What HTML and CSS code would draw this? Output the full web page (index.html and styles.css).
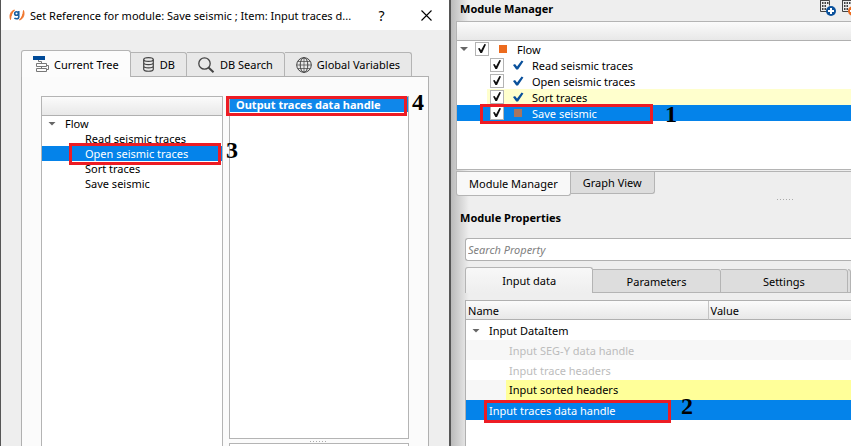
FILE: index.html
```html
<!DOCTYPE html>
<html lang="en">
<head>
    <meta charset="UTF-8">
    <title>Set Reference for module</title>
    <link rel="stylesheet" href="styles.css">
</head>
<body>

<!-- Reference dialog -->
<section class="dialog" role="dialog" aria-labelledby="dialogTitle">
    <header class="titlebar">
        <svg class="logo" viewBox="0 0 16 12">
            <path d="M5.500 1C2 2 0 6 1.500 10.500C2 6 3 3.500 5.500 1z" fill="#f0742a" stroke="#f0742a"/>
            <path d="M10.500 11C14 10 16 6 14.500 1.500C14 6 13 8.500 10.500 11z" fill="#f0742a" stroke="#f0742a"/>
            <circle cx="7.500" cy="4.500" r="1.800" fill="none" stroke="#1b5f9e" stroke-width="1.600"/>
            <path d="M9.800 2v6q0 1.800-2.300 1.800-1.300 0-2.100-.6" fill="none" stroke="#1b5f9e" stroke-width="1.500"/>
        </svg>
        <h1 id="dialogTitle">Set Reference for module: Save seismic ; Item: Input traces d...</h1>
        <button class="title-btn" type="button">?</button>
        <button class="title-btn" type="button" aria-label="Close">
            <svg width="11" height="11" viewBox="0 0 11 11"><path d="M.5 .5l10 10M10.500 .5l-10 10" stroke="#000" stroke-width="1.100"/></svg>
        </button>
    </header>

    <div class="dialog-body">
        <div class="tabs" role="tablist">
            <button class="tab active" role="tab" aria-selected="true" type="button">
                <svg width="17" height="17" viewBox="0 0 17 17">
                    <path d="M0 0h12v4H0z" fill="#004a98"/>
                    <path d="M5.500 4v1.500h3v2M3.500 7.500h10v3h-10zM3.500 12.500h10v3h-10zM13.500 9.500h2v4h-2M8.500 10.500v2" fill="none" stroke="#777"/>
                </svg>
                Current Tree
            </button>
            <button class="tab" role="tab" type="button">
                <svg width="13" height="15" viewBox="0 0 13 15">
                    <g fill="none" stroke="#444" stroke-width="1.200">
                        <ellipse cx="6.500" cy="2.500" rx="4.800" ry="1.900"/>
                        <path d="M1.700 2.500v9.800c0 2.600 9.600 2.600 9.600 0V2.500M1.700 5.800c0 2.500 9.600 2.500 9.600 0M1.700 9c0 2.500 9.600 2.500 9.600 0"/>
                    </g>
                </svg>
                DB
            </button>
            <button class="tab" role="tab" type="button">
                <svg width="17" height="16" viewBox="0 0 17 16">
                    <circle cx="6.500" cy="6.500" r="5.700" fill="none" stroke="#444" stroke-width="1.300"/>
                    <path d="M10.500 10.500l5 4.700" stroke="#444" stroke-width="2"/>
                </svg>
                DB Search
            </button>
            <button class="tab" role="tab" type="button">
                <svg width="16" height="16" viewBox="0 0 16 16">
                    <g fill="none" stroke="#444">
                        <circle cx="8" cy="8" r="7.300"/>
                        <ellipse cx="8" cy="8" rx="3.800" ry="7.300"/>
                        <path d="M8 .7v14.600M.7 8h14.600M2 4.500h12M2 11.500h12" stroke-width=".7"/>
                    </g>
                </svg>
                Global Variables
            </button>
        </div>

        <div class="pane">
            <div class="box source">
                <div class="box-header"></div>
                <ul class="tree">
                    <li class="row root"><span class="arrow"></span>Flow</li>
                    <li class="row">Read seismic traces</li>
                    <li class="row selected">Open seismic traces
                        <span class="mark mark-open"></span><b class="step step-open">3</b>
                    </li>
                    <li class="row">Sort traces</li>
                    <li class="row">Save seismic</li>
                </ul>
            </div>
            <div class="outputs">
                <div class="box output-list">
                    <div class="output-row">Output traces data handle
                        <span class="mark mark-output"></span><b class="step step-output">4</b>
                    </div>
                </div>
                <div class="grip"></div>
                <div class="box output-extra"></div>
            </div>
        </div>
    </div>
</section>

<!-- Main window behind the dialog -->
<main class="workspace">
    <div class="panel-head">
        <h2>Module Manager</h2>
        <div class="tools">
            <button class="tool" type="button" aria-label="Add module">
                <svg width="16" height="17" viewBox="0 0 16 17">
                    <path d="M.5 0v11.500h7M0 .5h9.500v5" fill="none" stroke="#444"/>
                    <path d="M2 3h1.500M4.500 3h1.500M7 3h1.500M2 6h1.500M4.500 6h1.500M2 9h1.500M4.500 9h1.500" stroke="#444" stroke-width="2"/>
                    <circle cx="11" cy="11" r="5" fill="#0a519c"/>
                    <path d="M11 8v6M8 11h6" stroke="#fff" stroke-width="2"/>
                </svg>
            </button>
            <button class="tool" type="button" aria-label="Remove module">
                <svg width="16" height="17" viewBox="0 0 16 17">
                    <path d="M.5 0v11.500h7M0 .5h9.500v5" fill="none" stroke="#444"/>
                    <path d="M2 3h1.500M4.500 3h1.500M7 3h1.500M2 6h1.500M4.500 6h1.500M2 9h1.500M4.500 9h1.500" stroke="#444" stroke-width="2"/>
                    <circle cx="11" cy="11" r="5" fill="#ec6b1e"/>
                    <path d="M8 11h6" stroke="#fff" stroke-width="2"/>
                </svg>
            </button>
        </div>
    </div>

    <div class="box manager">
        <div class="box-header"></div>
        <ul class="flow">
            <li class="flow-row top">
                <span class="arrow"></span>
                <input type="checkbox" id="flow" checked><span class="state square"></span><label for="flow">Flow</label>
            </li>
            <li class="flow-row">
                <input type="checkbox" id="read" checked><span class="state done"></span><label for="read">Read seismic traces</label>
            </li>
            <li class="flow-row">
                <input type="checkbox" id="open" checked><span class="state done"></span><label for="open">Open seismic traces</label>
            </li>
            <li class="flow-row changed">
                <input type="checkbox" id="sort" checked><span class="state done"></span><label for="sort">Sort traces</label>
            </li>
            <li class="flow-row selected">
                <input type="checkbox" id="save" checked><span class="state square"></span><label for="save">Save seismic</label>
                <span class="mark mark-save"></span><b class="step step-save">1</b>
            </li>
        </ul>
    </div>

    <div class="bottom-tabs" role="tablist">
        <button class="tab active" role="tab" aria-selected="true" type="button">Module Manager</button>
        <button class="tab" role="tab" type="button">Graph View</button>
    </div>
    <div class="grip"></div>

    <h2 class="props-title">Module Properties</h2>
    <div class="props">
        <input class="search" type="text" placeholder="Search Property" aria-label="Search Property">
        <div class="prop-tabs" role="tablist">
            <button class="tab active" role="tab" aria-selected="true" type="button">Input data</button>
            <button class="tab" role="tab" type="button">Parameters</button>
            <button class="tab" role="tab" type="button">Settings</button>
            <button class="tab rest" role="tab" type="button" aria-label="More"></button>
        </div>
        <div class="table-box">
            <table>
                <thead>
                    <tr><th class="name-col">Name</th><th>Value</th></tr>
                </thead>
                <tbody>
                    <tr><td class="group"><span class="arrow"></span>Input DataItem</td><td></td></tr>
                    <tr class="alt disabled"><td class="child">Input SEG-Y data handle</td><td></td></tr>
                    <tr class="disabled"><td class="child">Input trace headers</td><td></td></tr>
                    <tr class="alt filled"><td class="child"><span>Input sorted headers</span></td><td></td></tr>
                    <tr class="selected"><td class="item">Input traces data handle
                        <span class="mark mark-input"></span><b class="step step-input">2</b></td><td></td></tr>
                </tbody>
            </table>
        </div>
    </div>
</main>

</body>
</html>
```

FILE: styles.css
```css
* {
    box-sizing: border-box;
}

body {
    margin: 0;
    height: 100vh;
    display: flex;
    overflow: hidden;
    background: #eee;
    color: #000;
    font-family: "Noto Sans", "Open Sans", sans-serif;
    font-size: 11px;
    line-height: 15px;
}

h1, h2, ul {
    margin: 0;
    padding: 0;
    font-size: 11px;
}

ul {
    list-style: none;
}

button, input {
    font: inherit;
    color: inherit;
}

button {
    display: flex;
    align-items: center;
    justify-content: center;
    padding: 0;
    border: 0;
    background: none;
    white-space: nowrap;
}

svg {
    flex: none;
}

/* Dialog */
.dialog {
    flex: none;
    width: 53%;
    display: flex;
    flex-direction: column;
    border-left: 1px solid #555;
    border-right: 2px solid #555;
    background: #eee;
}

.titlebar {
    display: flex;
    align-items: center;
    height: 30px;
    padding-left: 8px;
    background: #fff;
}

.titlebar h1 {
    flex: 1;
    min-width: 0;
    margin-left: 5px;
    font-weight: normal;
    white-space: nowrap;
}

.logo {
    width: 16px;
    height: 12px;
}

.title-btn {
    flex: none;
    width: 45px;
    height: 30px;
    font-size: 14px;
}

.dialog-body {
    flex: 1;
    display: flex;
    flex-direction: column;
    padding: 20px 20px 0;
}

.tabs {
    display: flex;
    align-items: flex-end;
}

.tabs .tab {
    height: 24px;
    gap: 5px;
    padding: 0 11px;
    border: 1px solid #b4b4b4;
    border-left: 0;
    border-bottom: 0;
    border-radius: 0 3px 0 0;
    background: #e8e8e8;
}

.tabs .tab.active {
    height: 27px;
    margin-bottom: -1px;
    gap: 4px;
    border-left: 1px solid #b4b4b4;
    border-radius: 3px 3px 0 0;
    background: #fcfcfc;
    z-index: 1;
}

.pane {
    flex: 1;
    display: flex;
    gap: 6px;
    padding: 19px 19px 0;
    border: 1px solid #b0b0b0;
    border-bottom: 0;
    background: #fbfbfb;
}

.box {
    border: 1px solid #b4b4b4;
    background: #fff;
}

.box-header {
    height: 19px;
    border-bottom: 1px solid #b0b0b0;
    background: linear-gradient(#fbfbfb, #e8e8e8);
}

.source {
    flex: 1;
    border-bottom: 0;
}

.row {
    position: relative;
    height: 15px;
    padding-left: 43px;
}

.row.root {
    display: flex;
    align-items: center;
    padding-left: 6px;
    gap: 9px;
}

.arrow {
    flex: none;
    width: 8px;
    height: 4px;
    background: #666;
    clip-path: polygon(0 0, 100% 0, 50% 100%);
}

.selected {
    background: #0483ea;
    color: #fff;
}

.outputs {
    flex: 1;
    display: flex;
    flex-direction: column;
}

.output-list {
    flex: 1;
}

.output-row {
    position: relative;
    height: 15px;
    padding-left: 6px;
    background: #0f87ea;
    color: #fff;
    font-weight: bold;
}

.output-extra {
    height: 3px;
    border-bottom: 0;
}

.grip {
    height: 4px;
    background: repeating-linear-gradient(90deg, #aaa 0 1px, transparent 1px 3px) center / 18px 1px no-repeat;
}

/* Numbered callouts */
.mark {
    position: absolute;
    border: 3px solid #ed1c24;
}

.step {
    position: absolute;
    color: #000;
    font-family: "Liberation Serif", serif;
    font-size: 24px;
    line-height: 24px;
}

.mark-open { left: 27px; right: 1px; top: -3px; height: 22px; }
.step-open { right: -16px; top: -8px; }
.mark-output { left: -4px; right: 1px; top: -1px; height: 20px; }
.step-output { right: -16px; top: -7px; }
.mark-save { left: 23px; top: -1px; width: 173px; height: 20px; }
.step-save { left: 208px; top: -3px; }
.mark-input { left: 18px; top: 0; width: 187px; height: 23px; }
.step-input { left: 215px; top: -6px; }

/* Main window */
.workspace {
    flex: 1;
    min-width: 0;
    display: flex;
    flex-direction: column;
    padding-left: 5px;
    overflow: hidden;
    background: linear-gradient(90deg, #bbb, #eee 18px);
}

.workspace > * {
    flex: none;
}

.panel-head {
    display: flex;
    justify-content: space-between;
    height: 21px;
}

.panel-head h2 {
    padding: 1px 0 0 4px;
}

.tools {
    display: flex;
    gap: 6px;
    margin-right: -7px;
}

.tool {
    align-items: flex-start;
    width: 16px;
}

.manager {
    height: 149px;
    border-right: 0;
}

.flow-row {
    position: relative;
    display: flex;
    align-items: center;
    gap: 8px;
    height: 16px;
    padding-left: 33px;
}

.flow-row.top {
    padding-left: 3px;
}

.flow-row .arrow {
    margin-right: -1px;
}

.flow-row.changed {
    margin-left: 30px;
    padding-left: 3px;
    background: #ffffcd;
}

.flow-row input {
    appearance: none;
    display: flex;
    flex: none;
    width: 14px;
    height: 14px;
    margin: 0;
    border: 1px solid #b4b4b4;
    background: #fff;
}

.flow-row input:checked::after {
    content: "";
    width: 8px;
    height: 9px;
    margin: 1px 2px;
    background: #111;
    clip-path: polygon(0 50%, 20% 45%, 38% 70%, 80% 0, 100% 5%, 50% 100%, 30% 100%);
}

.state {
    flex: none;
    width: 12px;
    height: 10px;
}

.state.square {
    width: 8px;
    height: 8px;
    margin: 0 2px;
    background: #ec6b1e;
}

.selected .state.square {
    background: #a87560;
}

.state.done {
    background: #0a519c;
    clip-path: polygon(8% 50%, 25% 40%, 42% 65%, 80% 5%, 95% 15%, 50% 95%, 35% 95%);
}

.bottom-tabs {
    display: flex;
    align-items: flex-start;
    margin-top: 1px;
    border-top: 1px solid #b4b4b4;
}

.bottom-tabs .tab {
    height: 22px;
    padding: 0 12px;
    border: 1px solid #b4b4b4;
    border-top: 0;
    border-left: 0;
    border-radius: 0 0 3px 0;
    background: #ddd;
}

.bottom-tabs .tab.active {
    height: 24px;
    border-left: 1px solid #b4b4b4;
    border-radius: 0 0 3px 3px;
    background: #f8f8f8;
}

.workspace > .grip {
    margin: 1px 0 0 264px;
    width: 132px;
}

.props-title {
    margin-top: 9px;
    padding-left: 4px;
}

.workspace > .props {
    flex: 1;
    display: flex;
    flex-direction: column;
    padding: 13px 0 0 9px;
}

.search {
    display: block;
    width: 100%;
    height: 23px;
    padding: 0 2px;
    border: 1px solid #b0b0b0;
    border-right: 0;
    border-radius: 3px 0 0 3px;
    background: #fff;
}

.search::placeholder {
    color: #808080;
    font-style: italic;
}

.prop-tabs {
    display: flex;
    align-items: flex-end;
    margin-top: 6px;
}

.prop-tabs .tab {
    flex: 1;
    height: 24px;
    border: 1px solid #b4b4b4;
    border-left: 0;
    border-radius: 0 3px 0 0;
    background: #ddd;
}

.prop-tabs .tab.active {
    height: 26px;
    border-left: 1px solid #b4b4b4;
    border-bottom: 0;
    border-radius: 3px 3px 0 0;
    background: linear-gradient(#f8f8f8, #eee);
}

.prop-tabs .tab.rest {
    flex: 0 0 3px;
}

.table-box {
    flex: 1;
    margin-top: 7px;
    border: 1px solid #b0b0b0;
    border-width: 1px 0 0 1px;
    background: #fff;
}

table {
    width: 100%;
    border-collapse: separate;
    border-spacing: 0;
    table-layout: fixed;
}

th {
    height: 19px;
    padding: 0 2px;
    border-bottom: 1px solid #b0b0b0;
    background: linear-gradient(#fbfbfb, #e8e8e8);
    font-weight: normal;
    text-align: left;
}

th.name-col {
    width: 63%;
    border-right: 1px solid #c4c4c4;
}

td {
    position: relative;
    height: 20px;
    padding: 0;
}

td.group .arrow {
    display: inline-block;
    margin: 0 9px 2px 6px;
}

td.child {
    padding-left: 43px;
}

td.item {
    padding-left: 23px;
}

.alt td {
    background: #f7f7f7;
}

.disabled td {
    color: #bcbcbc;
}

.filled td {
    background: #ffff99;
}

.filled td.child {
    padding-left: 40px;
    background: #f7f7f7;
}

.filled td.child span {
    display: block;
    height: 20px;
    padding-left: 3px;
    background: #ffff99;
    line-height: 20px;
}
```
